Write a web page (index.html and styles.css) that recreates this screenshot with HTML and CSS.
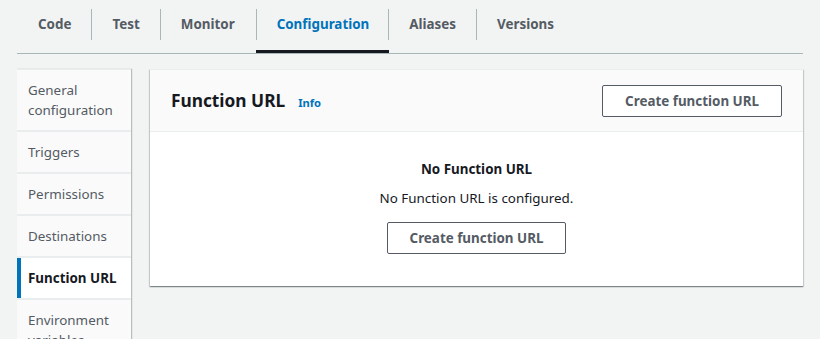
FILE: index.html
```html
<!DOCTYPE html>
<html lang="en">
<head>
    <meta charset="UTF-8">
    <meta name="viewport" content="width=device-width, initial-scale=1.0">
    <title>Function URL - Configuration</title>
    <link rel="stylesheet" href="styles.css">
</head>
<body>

    <div class="page">
        <!-- Top tabs -->
        <div class="tabs">
            <div class="tab"><span class="tab-label">Code</span></div>
            <div class="tab"><span class="tab-label">Test</span></div>
            <div class="tab"><span class="tab-label">Monitor</span></div>
            <div class="tab active"><span class="tab-label">Configuration</span></div>
            <div class="tab"><span class="tab-label">Aliases</span></div>
            <div class="tab"><span class="tab-label">Versions</span></div>
        </div>

        <div class="content">
            <!-- Side navigation -->
            <nav class="side-nav">
                <a class="nav-item">General configuration</a>
                <a class="nav-item">Triggers</a>
                <a class="nav-item">Permissions</a>
                <a class="nav-item">Destinations</a>
                <a class="nav-item active">Function URL</a>
                <a class="nav-item">Environment variables</a>
            </nav>

            <!-- Function URL panel -->
            <section class="panel">
                <div class="panel-header">
                    <div class="panel-title">
                        <h2>Function URL</h2>
                        <a class="info-link">Info</a>
                    </div>
                    <button type="button" class="btn">Create function URL</button>
                </div>
                <div class="panel-body">
                    <div class="empty-title">No Function URL</div>
                    <p class="empty-text">No Function URL is configured.</p>
                    <button type="button" class="btn">Create function URL</button>
                </div>
            </section>
        </div>
    </div>

</body>
</html>
```

FILE: styles.css
```css
/* --- General Setup --- */
:root {
    --bg-color: #f2f3f3;
    --text-color: #16191f;
    --muted-text: #545b64;
    --link-color: #0073bb;
    --line-color: #aab7b8;
    --soft-line: #eaeded;
}

body {
    margin: 0;
    font-family: 'Noto Sans', 'Open Sans', sans-serif;
    font-size: 13.4px;
    color: var(--text-color);
    background-color: var(--bg-color);
    height: 339px;
    overflow: hidden;
}

.page {
    width: 786px;
    margin-left: 17px;
}

/* --- Tabs --- */
.tabs {
    display: flex;
    border-bottom: 1px solid var(--line-color);
}

.tab {
    padding-top: 9px;
    padding-bottom: 10px;
    border-bottom: 3px solid transparent;
}

.tab-label {
    display: block;
    line-height: 31px;
    padding: 0 20px;
    font-weight: 700;
    color: var(--muted-text);
}

.tab:first-child .tab-label {
    padding-left: 21px;
}

.tab + .tab .tab-label {
    border-left: 1px solid var(--line-color);
}

.tab.active {
    border-bottom-color: var(--text-color);
    margin-left: 1px;
}

.tab.active .tab-label {
    color: var(--link-color);
}

.tab.active + .tab .tab-label {
    margin-left: -1px;
}

/* --- Layout --- */
.content {
    display: flex;
    align-items: flex-start;
    gap: 19px;
    margin-top: 15px;
}

/* --- Side Navigation --- */
.side-nav {
    width: 114px;
    flex-shrink: 0;
    display: flex;
    flex-direction: column;
    gap: 2px;
    background-color: var(--soft-line);
    border-top: 1px solid var(--soft-line);
    box-shadow: 1px 0 1px rgba(0, 28, 36, 0.25);
}

.nav-item {
    display: block;
    padding: 10px 11px;
    line-height: 20px;
    color: var(--muted-text);
    background-color: #fafafa;
}

.nav-item.active {
    background-color: #ffffff;
    border-left: 4px solid var(--link-color);
    padding-left: 7px;
    padding-right: 4px;
    color: var(--text-color);
    font-weight: 700;
    white-space: nowrap;
}

/* --- Panel --- */
.panel {
    flex: 1;
    background-color: #ffffff;
    border-top: 1px solid var(--soft-line);
    box-shadow: 0 1px 1px 0 rgba(0, 28, 36, 0.3),
                1px 1px 1px 0 rgba(0, 28, 36, 0.15),
                -1px 1px 1px 0 rgba(0, 28, 36, 0.15);
}

.panel-header {
    display: flex;
    justify-content: space-between;
    align-items: center;
    padding: 15px 21px 14px 21px;
    background-color: #fafafa;
    border-bottom: 1px solid var(--soft-line);
}

.panel-title {
    display: flex;
    align-items: baseline;
    gap: 13px;
}

h2 {
    margin: 0;
    font-size: 17.3px;
    font-weight: 700;
    line-height: 24px;
}

.info-link {
    font-size: 11.2px;
    font-weight: 700;
    color: var(--link-color);
}

.panel-body {
    display: flex;
    flex-direction: column;
    align-items: center;
    padding: 27px 20px 32px;
}

.empty-title {
    font-weight: 700;
    line-height: 20px;
}

.empty-text {
    margin: 9px 0 14px;
    line-height: 20px;
}

/* --- Buttons --- */
.btn {
    padding: 4px 22px;
    line-height: 22px;
    font-family: inherit;
    font-size: 13.4px;
    font-weight: 700;
    color: var(--muted-text);
    background-color: #ffffff;
    border: 1px solid var(--muted-text);
    border-radius: 2px;
    cursor: pointer;
}
```
